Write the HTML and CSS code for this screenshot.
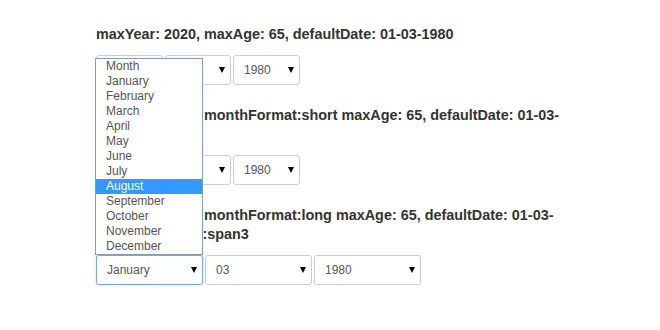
FILE: index.html
```html
<!DOCTYPE html>
<html lang="en">
<head>
  <meta charset="UTF-8">
  <title>Birthday picker</title>
  <link rel="stylesheet" href="styles.css">
</head>
<body>
  <div id="contenitore">

    <div class="esempio">
      <h4>maxYear: 2020, maxAge: 65, defaultDate: 01-03-1980</h4>
      <div class="riga piccola">
        <div class="scelta"><select><option>Month</option></select></div>
        <div class="scelta"><select><option>03</option></select></div>
        <div class="scelta"><select><option>1980</option></select></div>
      </div>
    </div>

    <div class="esempio">
      <h4>maxYear: 2020, monthFormat:short maxAge: 65, defaultDate: 01-03-1980</h4>
      <div class="riga piccola">
        <div class="scelta"><select><option>Jan</option></select></div>
        <div class="scelta"><select><option>03</option></select></div>
        <div class="scelta"><select><option>1980</option></select></div>
      </div>
    </div>

    <div class="esempio">
      <h4>maxYear: 2020, monthFormat:long maxAge: 65, defaultDate: 01-03-1980 formClass:span3</h4>
      <div class="riga larga">
        <div class="scelta attiva"><select><option>January</option></select></div>
        <div class="scelta"><select><option>03</option></select></div>
        <div class="scelta"><select><option>1980</option></select></div>
      </div>
    </div>

    <!-- lista aperta del primo select -->
    <ul id="lista">
      <li>Month</li>
      <li>January</li>
      <li>February</li>
      <li>March</li>
      <li>April</li>
      <li>May</li>
      <li>June</li>
      <li>July</li>
      <li class="evidenziato">August</li>
      <li>September</li>
      <li>October</li>
      <li>November</li>
      <li>December</li>
    </ul>
  </div>
</body>
</html>
```

FILE: styles.css
```css
html, body {
  margin: 0;
  padding: 0;
  background: white;
  font-family: "Liberation Sans", Arial, sans-serif;
  color: #333;
}

#contenitore {
  position: relative;
  width: 480px;
  margin-left: 96px;
  padding-top: 25px;
}

.esempio {
  margin-bottom: 21px;
}

h4 {
  margin: 0 0 11px;
  font-size: 0.9em;
  line-height: 19px;
  font-weight: bold;
}

.riga {
  display: flex;
  gap: 2px;
}

.scelta {
  position: relative;
}

.scelta::after {
  content: "";
  position: absolute;
  top: 12px;
  right: 6px;
  border-left: 3.5px solid transparent;
  border-right: 3.5px solid transparent;
  border-top: 6px solid #000;
  pointer-events: none;
}

.piccola .scelta { width: 66.5px; }
.larga .scelta { width: 107px; }

select {
  appearance: none;
  -webkit-appearance: none;
  width: 100%;
  height: 30px;
  box-sizing: border-box;
  padding: 0 10px;
  border: 1px solid #ccc;
  border-radius: 3px;
  background: white;
  font-family: "Liberation Sans", Arial, sans-serif;
  font-size: 12px;
  color: #555;
  outline: none;
}

.attiva select {
  border-color: #7aa6dc;
  box-shadow: 0 0 2px rgba(102, 175, 233, 0.6);
}

#lista {
  position: absolute;
  top: 58px;
  left: -1px;
  width: 106px;
  margin: 0;
  padding: 0;
  list-style: none;
  background: white;
  border: 1px solid #7f9dc4;
  font-size: 12px;
  color: #555;
  z-index: 10;
}

#lista li {
  height: 15px;
  line-height: 15px;
  padding-left: 10px;
}

#lista li.evidenziato {
  background: #3399ff;
  color: white;
}
```
